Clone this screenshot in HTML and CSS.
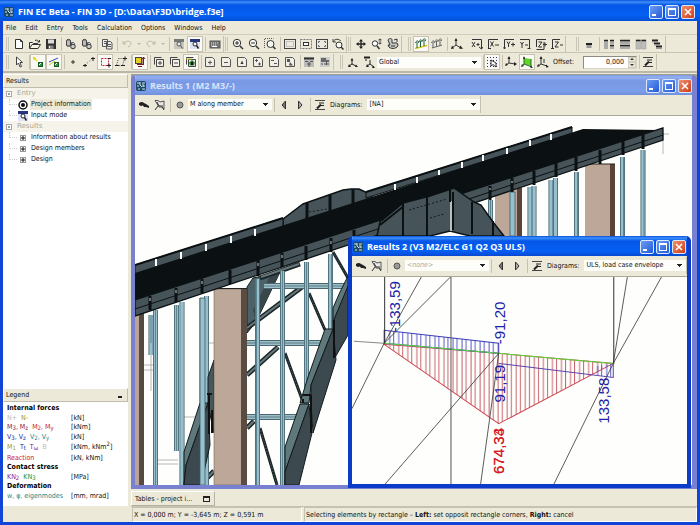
FILE: index.html
```html
<!DOCTYPE html>
<html lang="en">
<head>
<meta charset="utf-8">
<title>FIN EC Beta - FIN 3D</title>
<link rel="stylesheet" href="styles.css">
</head>
<body>
<svg class="sprite" aria-hidden="true">
  <symbol id="app" viewBox="0 0 12 12"><rect x="1" y="1" width="10" height="10" rx="2" fill="#1c4a68"/><path d="M2 3h3M7 3h3M2 6h2M5 5l2 2M8 6h2M3 9h2M7 9h3M5 2v3M8 4v3" stroke="#cfe4ea"/></symbol>
  <symbol id="new" viewBox="0 0 12 12"><path d="M2.500 1.500h5l2 2v7h-7z" fill="#fff" stroke="#333"/><path d="M7.500 1.500v2h2" fill="none" stroke="#333"/></symbol>
  <symbol id="open" viewBox="0 0 12 12"><path d="M.5 10V4.500h3l1 1h4V7M.5 10.500l2.500-4h8.500l-2.500 4z" fill="#f6f4e8" stroke="#333"/><path d="M6 2.500c2-1 3 0 4 1.500M10.500 2v2h-2" fill="none" stroke="#333"/></symbol>
  <symbol id="save" viewBox="0 0 12 12"><rect x="1" y="1" width="10" height="10" fill="#333"/><rect x="3" y="1.500" width="6" height="4" fill="#ddd"/><rect x="3.500" y="7.500" width="5" height="3.500" fill="#888"/><rect x="4" y="8" width="1" height="2" fill="#fff"/></symbol>
  <symbol id="db" viewBox="0 0 12 12"><path d="M1.500 2.500c0-1.500 4-1.500 4 0v5c0 1-4 1-4 0z" fill="#888" stroke="#444"/><path d="M2 4h3M2 6h3" stroke="#eee"/><path d="M6.500 4.500h2l1 1v2h-3z" fill="#ddd" stroke="#555"/><circle cx="8" cy="8.500" r="2.300" fill="#ccc" stroke="#333"/></symbol>
  <symbol id="copy" viewBox="0 0 12 12"><path d="M1.500 1.500h5v7h-5zM5.500 3.500h4l1.500 1.500v6h-5.500z" fill="#eee" stroke="#555"/><path d="M3 3.500h2M3 5.500h2M7 6.500h3M7 8.500h3" stroke="#555"/></symbol>
  <symbol id="undo" viewBox="0 0 12 12"><path d="M2 3v3h3M2 6c2-3 7-4 8-1 0 2-1 3-3 4" fill="none" stroke="#bdb9a8"/></symbol>
  <symbol id="redo" viewBox="0 0 12 12"><path d="M10 3v3H7M10 6C8 3 3 2 2 5c0 2 1 3 3 4" fill="none" stroke="#bdb9a8"/></symbol>
  <symbol id="view" viewBox="0 0 12 12"><rect x="1" y="1" width="10" height="10" fill="#c8c6bd"/><rect x="1" y="1" width="10" height="3" fill="#777"/><circle cx="6" cy="6" r="2" fill="#eee" stroke="#555"/><path d="M7.500 7.500l2 3" stroke="#444"/></symbol>
  <symbol id="viewb" viewBox="0 0 12 12"><rect x="1" y="1" width="10" height="10" fill="#dde3f4"/><rect x="1" y="1" width="10" height="3" fill="#26367e"/><circle cx="6" cy="6" r="2" fill="#fff" stroke="#222"/><path d="M7.500 7.500l2 3" stroke="#222" stroke-width="1.500"/></symbol>
  <symbol id="keys" viewBox="0 0 12 12"><rect x="1" y="3" width="10" height="7" fill="#777" stroke="#555"/><path d="M2 5h8M2 7h6" stroke="#ddd" stroke-dasharray="1 1"/><path d="M3 8.500h5" stroke="#fff"/></symbol>
  <symbol id="zin" viewBox="0 0 12 12"><circle cx="5" cy="5" r="3.700" fill="#f8f8f4" stroke="#333"/><path d="M3 5h4M5 3v4" stroke="#333"/><path d="M8 8l3 3" stroke="#333" stroke-width="1.500"/></symbol>
  <symbol id="zout" viewBox="0 0 12 12"><circle cx="5" cy="5" r="3.700" fill="#f8f8f4" stroke="#333"/><path d="M3 5h4" stroke="#333"/><path d="M8 8l3 3" stroke="#333" stroke-width="1.500"/></symbol>
  <symbol id="zreg" viewBox="0 0 12 12"><path d="M.5 10V.5h9" fill="none" stroke="#555" stroke-dasharray="1 1"/><circle cx="6.500" cy="6" r="3.500" fill="#f8f8f4" stroke="#333"/><path d="M9 8.500l2.500 2.500" stroke="#333" stroke-width="1.500"/></symbol>
  <symbol id="fit" viewBox="0 0 12 12"><rect x=".5" y="1.500" width="11" height="9" fill="#eceae0" stroke="#444"/><rect x="2.500" y="3.500" width="7" height="5" fill="none" stroke="#999" stroke-dasharray="1 1"/></symbol>
  <symbol id="fit2" viewBox="0 0 12 12"><rect x=".5" y="1.500" width="11" height="9" fill="none" stroke="#777" stroke-dasharray="2 1"/><rect x="3.500" y="4.500" width="5" height="3" fill="#fff" stroke="#333"/></symbol>
  <symbol id="fit3" viewBox="0 0 12 12"><rect x=".5" y="1.500" width="11" height="9" fill="#eceae0" stroke="#444"/><path d="M2.500 5V3.500H4M8 3.500h1.500V5M2.500 7v1.500H4M8 8.500h1.500V7" fill="none" stroke="#666"/></symbol>
  <symbol id="zprev" viewBox="0 0 12 12"><circle cx="7" cy="7" r="3" fill="#f8f8f4" stroke="#333"/><path d="M9 9l2.500 2.500" stroke="#333" stroke-width="1.500"/><path d="M1 1v3h3M1 4c2-4 6-3 8-1" fill="none" stroke="#444"/></symbol>
  <symbol id="move" viewBox="0 0 12 12"><path d="M6 2v8M2 6h8" stroke="#222" stroke-width="1.300"/><path d="M6 1l2 2.500H4zM6 11l2-2.500H4zM1 6l2.500-2v4zM11 6L8.500 4v4z" fill="#222"/></symbol>
  <symbol id="zdyn" viewBox="0 0 12 12"><circle cx="4" cy="5.500" r="2.700" fill="#fff" stroke="#333"/><path d="M6 8l2.500 3" stroke="#333" stroke-width="1.500"/><path d="M7.500 2l1.500-1 1.500 1M7.500 5L9 6l1.500-1M9 1v5" fill="none" stroke="#444"/></symbol>
  <symbol id="rot" viewBox="0 0 12 12"><path d="M1 2c1-2 4-2 4 0v3h5l1 2c0 3-6 5-9 2L1 7h2z" fill="#c9c9c4" stroke="#333"/><path d="M7 2l3-1v3M4 8h4" fill="none" stroke="#333"/></symbol>
  <symbol id="loads" viewBox="0 0 12 12"><path d="M0 10.500l12-3" stroke="#d0c020" stroke-width="1.500"/><path d="M2 10V4M5.500 9V3M9 8V2" stroke="#1f6030"/><path d="M.5 5c1-3 3-3 3 0M4 4c1-3 3-3 3 0M7.500 3c1-3 3-3 3 0" fill="none" stroke="#215c4a"/></symbol>
  <symbol id="loads2" viewBox="0 0 12 12"><path d="M1 10l10-3M2 10V4M5.500 9V3M9 8V2M.5 5c1-3 3-3 3 0M4 4c1-3 3-3 3 0M7.500 3c1-3 3-3 3 0" fill="none" stroke="#666"/></symbol>
  <symbol id="axes" viewBox="0 0 12 12"><path d="M5 1v6l5 3M5 7l-4 3" fill="none" stroke="#333"/><path d="M5 0l1.500 3h-3zM12 11L8 10.500l1.500-3zM0 11l1-3.500 2 3z" fill="#222"/></symbol>
  <symbol id="vX" viewBox="0 0 12 12"><path d="M1 1.500h9.500V11M8 9l2.500 2 1.500-2" fill="none" stroke="#333"/><path d="M1 4l3 5M4 4L1 9M5.500 6.500h3M7 5v3" stroke="#333"/></symbol>
  <symbol id="vXm" viewBox="0 0 12 12"><path d="M1.500 11V1.500H11M1.500 10.500H4" fill="none" stroke="#333"/><path d="M3.500 3.500l3 5M6.500 3.500l-3 5M8 7h4" stroke="#333"/></symbol>
  <symbol id="vY" viewBox="0 0 12 12"><path d="M1.500 11V1.500H11M.5 9.500l1 1.500 1-1.500" fill="none" stroke="#333"/><path d="M4 3.500l1.500 2.500L7 3.500M5.500 6v3M8 6.500h4M10 4.500v4" fill="none" stroke="#333"/></symbol>
  <symbol id="vYm" viewBox="0 0 12 12"><path d="M1 1.500h9.500V11M8.500 10.500h3" fill="none" stroke="#333"/><path d="M1.500 4L3 6.500 4.500 4M3 6.500V10M6 7h3" fill="none" stroke="#333"/></symbol>
  <symbol id="vZ" viewBox="0 0 12 12"><path d="M1.500 9V1.500H11M1.500 11.500H9V4" fill="none" stroke="#333"/><path d="M3.500 4h3.500l-3.500 5H7M8 6.500h4M10 4.500v4" fill="none" stroke="#333"/></symbol>
  <symbol id="vZm" viewBox="0 0 12 12"><path d="M1.500 11V1.500H9M0 10.500h3" fill="none" stroke="#333"/><path d="M4 4h3.500L4 9h3.500M9 7h3" fill="none" stroke="#333"/></symbol>
  <symbol id="wmin" viewBox="0 0 12 12"><rect x="3.500" y="5" width="5" height="5" fill="#999"/><path d="M3 6h6" stroke="#222" stroke-width="2"/></symbol>
  <symbol id="wcas" viewBox="0 0 12 12"><path d="M1 2h4v9H1zM7 2h4v4H7zM7 7h4v4H7z" fill="#aaa"/><path d="M1 2.500h4M7 2.500h4M7 7.500h4" stroke="#222" stroke-width="1.500"/></symbol>
  <symbol id="whor" viewBox="0 0 12 12"><path d="M1 2h10v4H1zM1 7h10v4H1z" fill="#aaa"/><path d="M1 2.500h10M1 7.500h10" stroke="#222" stroke-width="1.500"/></symbol>
  <symbol id="wver" viewBox="0 0 12 12"><path d="M1 2h4.500v9H1zM6.500 2H11v9H6.500z" fill="#bbb" stroke="#999" stroke-width=".5"/><path d="M1 2.500h4.500M6.500 2.500H11" stroke="#222" stroke-width="1.500"/></symbol>
  <symbol id="wstk" viewBox="0 0 12 12"><path d="M1 2.500h6M3 5.500h6M5 8.500h6" stroke="#222" stroke-width="2"/><path d="M1 4h2M3 7h2M5 10.500h6" stroke="#999"/></symbol>
  <symbol id="cur" viewBox="0 0 12 12"><path d="M3.500 1v8l2-2 1.500 4 1.500-.5L7 6.500h2.500z" fill="#fff" stroke="#444"/></symbol>
  <symbol id="snap1" viewBox="0 0 12 12"><path d="M1 1l4 4M3 1v3M1 3h3" stroke="#e4e020" stroke-width="1.500"/><rect x="6.500" y="6.500" width="4" height="4" fill="#2a9a3a" stroke="#155a20"/><path d="M7 9l2-2" stroke="#fff"/></symbol>
  <symbol id="snap2" viewBox="0 0 12 12"><path d="M1 6l9-4" stroke="#3050b0"/><path d="M1 9l6-4" stroke="#c8c820"/><rect x="6.500" y="6.500" width="4" height="4" fill="#2a9a3a" stroke="#155a20"/><path d="M7 9l2-2" stroke="#fff"/></symbol>
  <symbol id="pt" viewBox="0 0 12 12"><path d="M4 6h4M6 4v4" stroke="#333"/></symbol>
  <symbol id="ln" viewBox="0 0 12 12"><path d="M2 9l7-6" stroke="#555" stroke-dasharray="1 2"/><path d="M0 9.500h4M2 8v3M8 2.500h4M10 1v4" stroke="#222"/></symbol>
  <symbol id="sq" viewBox="0 0 12 12"><rect x="2.500" y="2.500" width="7" height="7" fill="none" stroke="#c02840" stroke-dasharray="2 1"/><path d="M8 9.500h4M10 7.500v4M9 2.500h3" stroke="#222"/></symbol>
  <symbol id="pg" viewBox="0 0 12 12"><path d="M3.500 2.500h6l-2 7h-6z" fill="none" stroke="#555" stroke-dasharray="1 1"/><path d="M8 2.500h4M10 .5v4M0 9.500h4M6 9.500h4" stroke="#222"/></symbol>
  <symbol id="sel" viewBox="0 0 12 12"><rect x="1.500" y="1.500" width="6" height="6" fill="#e8d020" stroke="#444"/><path d="M3 8.500h6V2M9.500 1v8M8 3l1.500-2L11 3M4 10.500h4" fill="none" stroke="#7a1c20"/></symbol>
  <symbol id="b" viewBox="0 0 12 12"><path d="M1.500 8.500v-7h7M3.500 3.500h7v7h-7z" fill="#f2f0e6" stroke="#444"/></symbol>
  <symbol id="b1" viewBox="0 0 12 12"><use href="#b"/><path d="M5 7h4M7 5v4" stroke="#444"/></symbol>
  <symbol id="b2" viewBox="0 0 12 12"><use href="#b"/><path d="M5 7h4" stroke="#444"/></symbol>
  <symbol id="b3" viewBox="0 0 12 12"><use href="#b"/><path d="M4 6.500l3-2.500 3 2.500-1 3H5z" fill="#2d8a34"/><path d="M1 3h6" stroke="#c8c820"/><rect x="6" y="6" width="2" height="3" fill="#111"/></symbol>
  <symbol id="c" viewBox="0 0 12 12"><path d="M1.500 1.500h7l2 2v7h-9z" fill="#f2f0e6" stroke="#555"/></symbol>
  <symbol id="c1" viewBox="0 0 12 12"><use href="#c"/><path d="M4 6.500h4M6 4.500v4" stroke="#555"/></symbol>
  <symbol id="c2" viewBox="0 0 12 12"><use href="#c"/><path d="M4 6.500h4" stroke="#555"/></symbol>
  <symbol id="c3" viewBox="0 0 12 12"><use href="#c"/><path d="M6 4.500l1.500 3.500h-3z" fill="#333"/></symbol>
  <symbol id="c4" viewBox="0 0 12 12"><use href="#c"/><path d="M3 4.500h3M4.500 3v3M6 8h3M7.500 6.500v3" stroke="#555"/></symbol>
  <symbol id="c5" viewBox="0 0 12 12"><use href="#c"/><path d="M3 4.500h3M6 7.500h3" stroke="#555"/></symbol>
  <symbol id="c6" viewBox="0 0 12 12"><use href="#c"/><path d="M3 3h3v3H3zM6 6l3 3.500H5z" fill="#555"/></symbol>
  <symbol id="tb1" viewBox="0 0 12 12"><rect x="1" y="1" width="10" height="10" fill="#bbb"/><path d="M1 2.500h10" stroke="#333" stroke-width="2"/><path d="M2 5.500h3M7 5.500h3M4 8h4M6 6v5" stroke="#555"/></symbol>
  <symbol id="tb2" viewBox="0 0 12 12"><rect x="1" y="1" width="10" height="10" fill="#ccc"/><path d="M2 3h5M2 5h8" stroke="#444" stroke-width="1.500"/><path d="M5 8h5M7.500 6v3M2 8h2" stroke="#555"/></symbol>
  <symbol id="ax1" viewBox="0 0 12 12"><path d="M5 3v5l4 2M5 8l-3 2" fill="none" stroke="#222"/><path d="M5 2l1.500 2.500h-3zM11 11H8l1-2.500zM1 11l1-3 2 3z" fill="#222"/></symbol>
  <symbol id="ax2" viewBox="0 0 12 12"><path d="M1 1.500h6" stroke="#222" stroke-width="2"/><path d="M2 4h2M7 4v4l4 3M7 8l-3 2" fill="none" stroke="#222"/><path d="M12 12H9l1-2.500zM3 11l1-3 2 3z" fill="#222"/></symbol>
  <symbol id="grid" viewBox="0 0 12 12"><path d="M1 1.500h11M1 4.500h11M1 7.500h11M1 10.500h11" stroke="#26307a" stroke-dasharray="1 2"/><path d="M5 4v6l2-1.500L10 11V7z" fill="#fff" stroke="#333"/></symbol>
  <symbol id="xy" viewBox="0 0 12 12"><path d="M4 1v6l6 1M4 7l-3 2" fill="none" stroke="#333"/><path d="M4 0l1.500 3h-3zM12 8L9 6v4zM0 10l1-3 2 2z" fill="#222"/></symbol>
  <symbol id="plane" viewBox="0 0 12 12"><path d="M3 2l7 1v7l-7-2z" fill="#62d428"/><path d="M3 1v7l8 3M3 8l-2 2M10 3v7" fill="none" stroke="#1c6a20"/><path d="M0 11l1-3 2 2zM12 12l-3-.5 1-2zM3 0l1 3H2z" fill="#222"/></symbol>
  <symbol id="yz" viewBox="0 0 12 12"><path d="M4 1v7l6 2M4 8l-3 2M7 3v4" fill="none" stroke="#333"/><path d="M4 0l1.500 3h-3zM12 11L9 8.500v3zM0 11l1-3 2 2z" fill="#222"/></symbol>
  <symbol id="set" viewBox="0 0 12 12"><path d="M1 1.500h10M1 10.500h10" stroke="#444"/><path d="M3 9.500l4-4" stroke="#222" stroke-width="2"/><path d="M5 4h5M6 6.500h4" stroke="#222"/></symbol>
  <symbol id="eye" viewBox="0 0 12 12"><path d="M1 4c2-1.500 4-1 5 0l2 1 3 2v2L8 8 6 8 5 6.500 3 7 1 6z" fill="#222"/></symbol>
  <symbol id="pan" viewBox="0 0 12 12"><path d="M1 1.500h3L6 3l4-1v8l-2-2H5z" fill="#e8e8e4" stroke="#555"/><path d="M4 7l-3 4M8 8l2 3M3 3l2 4h4" fill="none" stroke="#333"/></symbol>
  <symbol id="dot" viewBox="0 0 12 12"><circle cx="6" cy="6" r="3" fill="#999" stroke="#555"/></symbol>
  <symbol id="prev" viewBox="0 0 12 12"><path d="M7.500 2v8L4 6z" fill="#777" stroke="#333"/></symbol>
  <symbol id="next" viewBox="0 0 12 12"><path d="M4.500 2v8L8 6z" fill="#aaa" stroke="#333"/></symbol>
  <symbol id="radio" viewBox="0 0 12 12"><circle cx="6" cy="6" r="4" fill="#fff" stroke="#111" stroke-width="1.500"/><circle cx="6" cy="6" r="2" fill="#111"/></symbol>
  <symbol id="box+" viewBox="0 0 12 12"><rect x="3.500" y="3.500" width="5" height="5" fill="#fff" stroke="#999"/><path d="M4 6h4M6 4v4" stroke="#111"/></symbol>
  <symbol id="box-" viewBox="0 0 12 12"><rect x="3.500" y="3.500" width="5" height="5" fill="#fff" stroke="#aaa"/><path d="M5 6h2" stroke="#444"/></symbol>
  <symbol id="cmin" viewBox="0 0 12 12"><path d="M2 9h4" stroke="#fff" stroke-width="2"/></symbol>
  <symbol id="cmax" viewBox="0 0 12 12"><path d="M2 3h8" stroke="#fff" stroke-width="2"/><rect x="2.500" y="2.500" width="7" height="7" fill="none" stroke="#fff"/></symbol>
  <symbol id="ccls" viewBox="0 0 12 12"><path d="M3 3l6 6M9 3L3 9" stroke="#fff" stroke-width="1.500"/></symbol>
</svg>

<div class="app">
  <header class="titlebar">
    <svg class="ic"><use href="#app"/></svg><h1>FIN EC Beta - FIN 3D - [D:\Data\F3D\bridge.f3e]</h1>
    <div class="caps">
      <button aria-label="Minimize"><svg class="ic"><use href="#cmin"/></svg></button>
      <button aria-label="Maximize"><svg class="ic"><use href="#cmax"/></svg></button>
      <button class="close" aria-label="Close"><svg class="ic"><use href="#ccls"/></svg></button>
    </div>
  </header>

  <nav class="menu">
    <button>File</button><button>Edit</button><button>Entry</button><button>Tools</button><button>Calculation</button><button>Options</button><button>Windows</button><button>Help</button>
  </nav>

  <div class="bar">
    <div class="group">
      <button class="tb" aria-label="New"><svg class="ic"><use href="#new"/></svg></button>
      <button class="tb" aria-label="Open"><svg class="ic"><use href="#open"/></svg></button>
      <button class="tb" aria-label="Save"><svg class="ic"><use href="#save"/></svg></button>
      <i class="sep"></i>
      <button class="tb" aria-label="Import"><svg class="ic"><use href="#db"/></svg></button>
      <button class="tb" aria-label="Export"><svg class="ic"><use href="#db"/></svg></button>
      <i class="sep"></i>
      <button class="tb" aria-label="Copy"><svg class="ic"><use href="#copy"/></svg></button>
      <i class="sep"></i>
      <button class="tb" aria-label="Undo"><svg class="ic"><use href="#undo"/></svg></button>
      <button class="drop" aria-label="Undo list"></button>
      <button class="tb" aria-label="Redo"><svg class="ic"><use href="#redo"/></svg></button>
      <button class="drop" aria-label="Redo list"></button>
      <i class="sep"></i>
      <button class="tb" aria-label="Input view"><svg class="ic"><use href="#view"/></svg></button>
      <button class="tb on" aria-label="Result view"><svg class="ic"><use href="#viewb"/></svg></button>
      <i class="sep"></i>
      <button class="tb" aria-label="Calculator"><svg class="ic"><use href="#keys"/></svg></button>
    </div>
    <div class="group">
      <button class="tb" aria-label="Zoom in"><svg class="ic"><use href="#zin"/></svg></button>
      <button class="tb" aria-label="Zoom out"><svg class="ic"><use href="#zout"/></svg></button>
      <button class="tb" aria-label="Zoom region"><svg class="ic"><use href="#zreg"/></svg></button>
      <i class="sep"></i>
      <button class="tb" aria-label="Fit"><svg class="ic"><use href="#fit"/></svg></button>
      <button class="tb" aria-label="Fit selection"><svg class="ic"><use href="#fit2"/></svg></button>
      <button class="tb" aria-label="Fit all"><svg class="ic"><use href="#fit3"/></svg></button>
      <button class="tb" aria-label="Previous zoom"><svg class="ic"><use href="#zprev"/></svg></button>
    </div>
    <div class="group">
      <button class="tb" aria-label="Pan"><svg class="ic"><use href="#move"/></svg></button>
      <button class="tb" aria-label="Dynamic zoom"><svg class="ic"><use href="#zdyn"/></svg></button>
      <button class="tb" aria-label="Rotate"><svg class="ic"><use href="#rot"/></svg></button>
    </div>
    <div class="group apart">
      <button class="tb on" aria-label="Axonometry"><svg class="ic"><use href="#loads"/></svg></button>
      <button class="tb" aria-label="Perspective"><svg class="ic"><use href="#loads2"/></svg></button>
      <i class="sep"></i>
      <button class="tb" aria-label="General view"><svg class="ic"><use href="#axes"/></svg></button>
      <i class="sep plain"></i>
      <button class="tb" aria-label="View X+"><svg class="ic"><use href="#vX"/></svg></button>
      <button class="tb" aria-label="View X-"><svg class="ic"><use href="#vXm"/></svg></button>
      <button class="tb" aria-label="View Y+"><svg class="ic"><use href="#vY"/></svg></button>
      <button class="tb" aria-label="View Y-"><svg class="ic"><use href="#vYm"/></svg></button>
      <button class="tb" aria-label="View Z+"><svg class="ic"><use href="#vZ"/></svg></button>
      <button class="tb" aria-label="View Z-"><svg class="ic"><use href="#vZm"/></svg></button>
    </div>
    <div class="group apart">
      <button class="tb" aria-label="Minimize all"><svg class="ic"><use href="#wmin"/></svg></button>
      <i class="sep"></i>
      <button class="tb" aria-label="Arrange"><svg class="ic"><use href="#wcas"/></svg></button>
      <button class="tb" aria-label="Tile horizontally"><svg class="ic"><use href="#whor"/></svg></button>
      <button class="tb" aria-label="Tile vertically"><svg class="ic"><use href="#wver"/></svg></button>
      <button class="tb" aria-label="Cascade"><svg class="ic"><use href="#wstk"/></svg></button>
    </div>
  </div>

  <div class="bar second">
    <div class="group">
      <button class="tb" aria-label="Select"><svg class="ic"><use href="#cur"/></svg></button>
      <i class="sep"></i>
      <button class="tb on" aria-label="Select joints"><svg class="ic"><use href="#snap1"/></svg></button>
      <button class="tb on" aria-label="Select members"><svg class="ic"><use href="#snap2"/></svg></button>
      <i class="sep"></i>
      <button class="tb" aria-label="By point"><svg class="ic"><use href="#pt"/></svg></button>
      <button class="tb" aria-label="By line"><svg class="ic"><use href="#ln"/></svg></button>
      <button class="tb on" aria-label="By rectangle"><svg class="ic"><use href="#sq"/></svg></button>
      <button class="tb" aria-label="By polygon"><svg class="ic"><use href="#pg"/></svg></button>
      <i class="sep"></i>
      <button class="tb on" aria-label="Crossing"><svg class="ic"><use href="#sel"/></svg></button>
      <i class="sep"></i>
      <button class="tb" aria-label="Add"><svg class="ic"><use href="#b1"/></svg></button>
      <button class="tb" aria-label="Remove"><svg class="ic"><use href="#b2"/></svg></button>
      <button class="tb on" aria-label="Invert"><svg class="ic"><use href="#b3"/></svg></button>
      <i class="sep"></i>
      <button class="tb" aria-label="Select all"><svg class="ic"><use href="#c1"/></svg></button>
      <button class="tb" aria-label="Deselect all"><svg class="ic"><use href="#c2"/></svg></button>
      <button class="tb" aria-label="Select group"><svg class="ic"><use href="#c3"/></svg></button>
      <button class="tb" aria-label="Add group"><svg class="ic"><use href="#c4"/></svg></button>
      <button class="tb" aria-label="Remove group"><svg class="ic"><use href="#c5"/></svg></button>
      <button class="tb" aria-label="Invert group"><svg class="ic"><use href="#c6"/></svg></button>
      <i class="sep"></i>
      <button class="tb" aria-label="Filter"><svg class="ic"><use href="#tb1"/></svg></button>
      <button class="tb" aria-label="Filter settings"><svg class="ic"><use href="#tb2"/></svg></button>
    </div>
    <div class="group apart">
      <button class="tb" aria-label="Coordinate system"><svg class="ic"><use href="#ax1"/></svg></button>
      <button class="tb" aria-label="Coordinate systems"><svg class="ic"><use href="#ax2"/></svg></button>
      <select class="combo w-global" aria-label="Coordinate system name"><option>Global</option></select>
      <i class="sep"></i>
      <button class="tb on" aria-label="Grid"><svg class="ic"><use href="#grid"/></svg></button>
      <i class="sep"></i>
      <button class="tb" aria-label="Plane XY"><svg class="ic"><use href="#xy"/></svg></button>
      <button class="tb on" aria-label="Plane XZ"><svg class="ic"><use href="#plane"/></svg></button>
      <button class="tb" aria-label="Plane YZ"><svg class="ic"><use href="#yz"/></svg></button>
      <label class="lbl" for="offset">Offset:</label>
      <span class="spin"><input id="offset" type="text" value="0,000"><span class="steps"><button aria-label="Increase"></button><button class="down" aria-label="Decrease"></button></span></span>
      <i class="sep"></i>
      <button class="tb" aria-label="Settings"><svg class="ic"><use href="#set"/></svg></button>
    </div>
  </div>

  <div class="main">
    <aside class="side">
      <h2 class="head">Results</h2>
      <ul class="tree">
        <li class="cat"><svg class="ic"><use href="#box-"/></svg>Entry</li>
        <li class="leaf"><svg class="ic"><use href="#radio"/></svg><span class="picked">Project information</span></li>
        <li class="leaf"><svg class="ic"><use href="#viewb"/></svg><span>Input mode</span></li>
        <li class="cat"><svg class="ic"><use href="#box-"/></svg>Results</li>
        <li class="leaf"><svg class="ic"><use href="#box+"/></svg><span>Information about results</span></li>
        <li class="leaf"><svg class="ic"><use href="#box+"/></svg><span>Design members</span></li>
        <li class="leaf"><svg class="ic"><use href="#box+"/></svg><span>Design</span></li>
      </ul>
      <h2 class="head">Legend <button class="fold" aria-label="Collapse legend"></button></h2>
      <table class="legend">
        <tr><th colspan="2">Internal forces</th></tr>
        <tr><td><b class="c-grey">N+</b>&nbsp; <b class="c-olive">N-</b></td><td>[kN]</td></tr>
        <tr><td><b class="c-maroon">M<sub>3</sub>, M<sub>z</sub></b>&nbsp; <b class="c-red">M<sub>2</sub>, M<sub>y</sub></b></td><td>[kNm]</td></tr>
        <tr><td><b class="c-navy">V<sub>3</sub>, V<sub>z</sub></b>&nbsp; <b class="c-teal">V<sub>2</sub>, V<sub>y</sub></b></td><td>[kN]</td></tr>
        <tr class="tall"><td><b class="c-olive">M<sub>1</sub></b>&nbsp; <b class="c-navy">T<sub>t</sub></b>&nbsp; <b class="c-purple">T<sub>ω</sub></b>&nbsp; <b class="c-grey">B</b></td><td>[kNm, kNm<sup>2</sup>]</td></tr>
        <tr><td><b class="c-red">Reaction</b></td><td>[kN, kNm]</td></tr>
        <tr><th colspan="2">Contact stress</th></tr>
        <tr><td><b class="c-purple">KN<sub>2</sub></b>&nbsp; <b class="c-green">KN<sub>3</sub></b></td><td>[MPa]</td></tr>
        <tr><th colspan="2">Deformation</th></tr>
        <tr><td><b class="c-teal">w, φ, eigenmodes</b></td><td>[mm, mrad]</td></tr>
      </table>
    </aside>

    <div class="work">
      <div class="desk">
        <section class="win idle">
          <header class="wtitle">
            <svg class="ic"><use href="#app"/></svg><h2>Results 1 (M2 M3/-)</h2>
            <div class="caps">
              <button aria-label="Minimize"><svg class="ic"><use href="#cmin"/></svg></button>
              <button aria-label="Maximize"><svg class="ic"><use href="#cmax"/></svg></button>
              <button class="close" aria-label="Close"><svg class="ic"><use href="#ccls"/></svg></button>
            </div>
          </header>
          <div class="wbar">
            <div class="wgroup">
              <button class="tb" aria-label="Visibility"><svg class="ic"><use href="#eye"/></svg></button>
              <button class="tb" aria-label="Scene"><svg class="ic"><use href="#pan"/></svg></button>
              <i class="sep"></i>
              <button class="tb" aria-label="State"><svg class="ic"><use href="#dot"/></svg></button>
              <select class="combo w-case" aria-label="Load case"><option>M along member</option></select>
              <i class="sep"></i>
              <button class="tb" aria-label="Previous"><svg class="ic"><use href="#prev"/></svg></button>
              <button class="tb" aria-label="Next"><svg class="ic"><use href="#next"/></svg></button>
              <i class="sep"></i>
              <button class="tb" aria-label="Diagram settings"><svg class="ic"><use href="#set"/></svg></button>
              <label class="lbl" for="d1">Diagrams:</label>
              <select class="combo w-diag" id="d1"><option>[NA]</option></select>
            </div>
          </div>
          <svg class="scene" viewBox="135 116 557 369" preserveAspectRatio="xMinYMin slice" role="img" aria-label="3D model of the bridge">
            <g fill="none" stroke="#999" stroke-width=".7"><path d="M135 365h20M135 370h20M155 460h23M155 464h23M183 417h20M209 343h5M151 355v36M662 134h7M663 133v21"/></g>
            <path d="M135 312h4v173h-4z" fill="#b9a495"/><path d="M139 312h5v173h-5z" fill="#554a42"/>
            <!-- far arch and bracing -->
            <path d="M247 287l6-9 27-6-24 50-9 11z" fill="#4d6268" stroke="#16201f"/>
            <path d="M253 310l18-36 9-2-24 50z" fill="#39474b"/>
            <g fill="none" stroke="#1b2628" stroke-width="5"><path d="M247 328l55-41M247 375l31-28M247 428l7-7M204 481l10-10M260 278l40-14"/></g>
            <g fill="none" stroke="#66787c" stroke-width="2"><path d="M247 328l55-41M247 375l31-28M247 428l7-7M204 481l10-10M261 277l38-13"/></g>
            <g fill="none" stroke="#1b2628" stroke-width="3"><path d="M309 293l16 37M285 353l18 49M260 428l17 57M333 252l15 26"/></g>
            <g fill="none" stroke="#5b6a6c" stroke-dasharray="1 2"><path d="M309 293l16 37M285 353l18 49M260 428l17 57M333 252l15 26"/></g>
            <g fill="none" stroke="#4c666f" stroke-width="6"><path d="M264 286h84M247 343h78M247 417h50"/></g>
            <g fill="none" stroke="#9cc0ca" stroke-width="4"><path d="M264 286h84M247 343h78M247 417h50"/></g>
            <g fill="none" stroke="#5c7a83"><path d="M264 286h84M247 343h78M247 417h50"/></g>
            <!-- columns under the deck -->
            <g fill="none" stroke="#3b5a64" stroke-width="5"><path d="M151 315v40M155.500 310v175M176.500 305v146M182 302v183M202 298v187M206.500 296v189M257.500 279v206M282.500 271v214M306.500 262v142M330.500 254v75M490.500 200v36M512.500 192v44M530 187v49M534 186v50M551 180v56M555.500 178v58M576.500 172v64M622.500 157v79M643 150v86"/></g>
            <g fill="none" stroke="#98c0cc" stroke-width="3.500"><path d="M151 315v40M155.500 310v175M176.500 305v146M182 302v183M202 298v187M206.500 296v189M257.500 279v206M282.500 271v214M306.500 262v142M330.500 254v75M490.500 200v36M512.500 192v44M530 187v49M534 186v50M551 180v56M555.500 178v58M576.500 172v64M622.500 157v79M643 150v86"/></g>
            <g fill="none" stroke="#4f7683" stroke-width=".8"><path d="M151 315v28M155.500 310v175M176.500 305v146M203.500 298v187M256.500 279v206M282.500 271v214M306.500 262v142M331.500 254v75M490.500 200v36M512.500 192v44M532 187v49M553 180v56M577.500 172v64M623.500 157v79M644 150v86"/></g>
            <!-- near arch ribs -->
            <g stroke="#121a1c" stroke-linejoin="round">
              <path d="M348 276l-8 16-7 16v14l15-34z" fill="#5f787c"/><path d="M348 286l-15 36v39l15-26z" fill="#3c4a50"/>
              <path d="M325 329l8 0-22 56-2 18h-9l8-26z" fill="#5f787c"/><path d="M333 329l3 31-23 73-2-30v-18z" fill="#3c4a50"/>
              <path d="M300 404h9l-23 65-1 16v-38z" fill="#5f787c"/><path d="M309 404l3 29-13 52h-14v-13z" fill="#3c4a50"/>
              <path d="M200 403h8l-22 62-2 20v-33z" fill="#5f787c"/><path d="M208 403l2 42-9 40h-17l2-20z" fill="#3c4a50"/>
              <path d="M214 360l-6 17v28l6 28z" fill="#47585d"/>
            </g>
            <path d="M303 395h8M303 399v4M311 395v38M334 320v38M209 394v40M207 394h5M212 410v23" fill="none" stroke="#111" stroke-width="2"/>
            <path d="M200 298h5v187h-5z" fill="#98c0cc" stroke="#3b5a64" stroke-width=".8"/>
            <!-- piers -->
            <path d="M214 289h28v196h-28z" fill="#bca798" stroke="#77675c" stroke-width=".6"/><path d="M241 289h6v196h-6z" fill="#5a4c42"/><path d="M214 288.500h33" stroke="#222"/>
            <path d="M495 196l22-8v48h-22z" fill="#bca798"/><path d="M517 188h5v48h-5z" fill="#5a4338"/>
            <path d="M585 164h26v72h-26z" fill="#bca798"/><path d="M610 164h5v72h-5z" fill="#5a4338"/><path d="M585 164h30" stroke="#2a201a"/>
            <path d="M510 192h5v44h-5z" fill="#98c0cc" stroke="#3b5a64" stroke-width=".8"/>
            <!-- deck -->
            <path d="M283 219l20-15 40-14 8-1 8 0 13 6v8l-89 28z" fill="#46545a" stroke="#0c1214" stroke-width="1.500"/>
            <path d="M135 265l148-47v9l-148 47zM366 192l206-65v7l-206 64z" fill="#46545a" stroke="#0c1214"/>
            <path d="M135 265l148-47M366 192l206-65" stroke="#0a0f11" stroke-width="2"/>
            <path d="M135 300l528-172v12L135 316z" fill="#46545a" stroke="#0b1113" stroke-width="1.300"/>
            <path d="M135 309l528-174" stroke="#0b1113"/>
            <path d="M135 273l448-144 74 1 6-2-196 64-332 108z" fill="#0b1012"/>
            <path d="M307 203v16M330 195v17M353 189v16" stroke="#0c1214" stroke-width="3"/>
            <path d="M309 212l18-3" stroke="#151c1e" stroke-dasharray="2 2"/>
            <path d="M156 259v7M181 252v7M206 244v7M231 236v7M255 229v7M395 184v6M417 177v6M439 170v5M462 162v6M483 155v6M507 148v6M530 140v6M551 134v6" stroke="#fff" stroke-width="2"/>
            <path d="M150 296v14M176 288v14M202 279v14M230 270v14M258 260v16M282 253v14M306 246v14M331 238v14M354 230v9M490 186v14M512 178v14M534 171v14M556 163v14M576 157v14M600 150v14M623 141v14M643 135v14" stroke="#0b1113" stroke-width="3"/>
            <path d="M150 298v3M176 290v3M202 281v3M258 263v3M282 255v3M331 241v3M490 188v2M512 181v2" stroke="#ccc"/>
            <!-- arch crown -->
            <path d="M377 236l3-14 23-19 27-7 24-8 20 14 7 3 12 17 11 14h-34l-20-5-20 5z" fill="#46545a" stroke="#0c1214" stroke-width="1.500"/>
            <path d="M403 203v33M427 196v40M472 202v32M380 225l24-19M493 221v15" stroke="#0b1113" stroke-width="2" fill="none"/>
            <path d="M451 201v30" stroke="#dfe5e6" stroke-width="1.500"/><path d="M450 190v12M453 192v38" stroke="#0b1113" stroke-width="2"/>
            <path d="M409 210l38-11M430 218l14-4" stroke="#10181a" stroke-dasharray="2 2"/>
          </svg>
        </section>

        <section class="win float">
          <header class="wtitle">
            <svg class="ic"><use href="#app"/></svg><h2>Results 2 (V3 M2/ELC G1 Q2 Q3 ULS)</h2>
            <div class="caps">
              <button aria-label="Minimize"><svg class="ic"><use href="#cmin"/></svg></button>
              <button aria-label="Maximize"><svg class="ic"><use href="#cmax"/></svg></button>
              <button class="close" aria-label="Close"><svg class="ic"><use href="#ccls"/></svg></button>
            </div>
          </header>
          <div class="wbar">
            <div class="wgroup">
              <button class="tb" aria-label="Visibility"><svg class="ic"><use href="#eye"/></svg></button>
              <button class="tb" aria-label="Scene"><svg class="ic"><use href="#pan"/></svg></button>
              <i class="sep"></i>
              <button class="tb" aria-label="State"><svg class="ic"><use href="#dot"/></svg></button>
              <select class="combo w-case none" aria-label="Load case"><option>&lt;none&gt;</option></select>
              <i class="sep"></i>
              <button class="tb" aria-label="Previous"><svg class="ic"><use href="#prev"/></svg></button>
              <button class="tb" aria-label="Next"><svg class="ic"><use href="#next"/></svg></button>
              <i class="sep"></i>
              <button class="tb" aria-label="Diagram settings"><svg class="ic"><use href="#set"/></svg></button>
              <label class="lbl" for="d2">Diagrams:</label>
              <select class="combo w-diag" id="d2"><option>ULS, load case envelope</option></select>
            </div>
          </div>
          <svg class="scene" viewBox="352 277 335 206" preserveAspectRatio="xMinYMin slice" role="img" aria-label="Internal force diagram">
            <defs>
              <pattern id="hr" x="384" y="277" width="9" height="20" patternUnits="userSpaceOnUse"><path d="M.5 0v20M5.500 0v20" stroke="#c8646c"/></pattern>
              <pattern id="hb" x="384" y="277" width="9" height="20" patternUnits="userSpaceOnUse"><path d="M.5 0v20M5.500 0v20" stroke="#5a5ac8"/></pattern>
            </defs>
            <path d="M384 344l114 79 114-60-114-10z" fill="url(#hr)" stroke="#cc4a54"/>
            <path d="M384 330l114 13v10l-114-10z" fill="url(#hb)" stroke="#4040bb"/>
            <path d="M498 363l114 14v-14" fill="none" stroke="#5a40b0"/>
            <path d="M594 366l18-3v14l-18-2z" fill="url(#hb)"/>
            <path d="M384 343l228 20" stroke="#58d838"/>
            <path d="M354 341l30 2" stroke="#888"/>
            <path d="M384.500 277v66M612.500 277v86" stroke="#333"/><path d="M450.500 277v206" stroke="#555"/>
            <path d="M421 277l-37 66-32 65M450 277l-66 66M498 353L385 483M498 353l-18 130M626 277l-14 86M660 277l-48 86-59 120" fill="none" stroke="#333" stroke-width=".8"/>
            <g class="val"><text transform="translate(400 332) rotate(-90)">-133,59</text><text transform="translate(504 344) rotate(-90)">-91,20</text><text transform="translate(504 402) rotate(-90)">91,19</text><text transform="translate(608 423) rotate(-90)">133,58</text></g>
            <g class="val red"><text transform="translate(503 473) rotate(-90)">674,33</text><text transform="translate(503 473) rotate(-90)">674,34</text></g>
          </svg>
        </section>
      </div>

      <div class="tabs"><button class="tab">Tables - project i...<i class="restore"></i></button></div>
      <footer class="status"><span class="pos">X = 0,000 m; Y = -3,645 m; Z = 0,591 m</span><span class="hint">Selecting elements by rectangle – <b>Left:</b> set opposit rectangle corners, <b>Right:</b> cancel</span></footer>
    </div>
  </div>
</div>
</body>
</html>
```

FILE: styles.css
```css
*, *::before, *::after { box-sizing: border-box; }
body { margin: 0; font: 7px/10px "DejaVu Sans Condensed", "DejaVu Sans", sans-serif; color: #111; background: #ece9d8; }
h1, h2, ul { margin: 0; padding: 0; font: inherit; }
button, select, input { margin: 0; padding: 0; border: 0; font: inherit; color: inherit; background: none; }
.sprite { position: absolute; width: 0; height: 0; }
.ic { width: 12px; height: 12px; flex: none; display: block; }

.app { height: 100vh; display: flex; flex-direction: column; border: 3px solid #1244d8; border-top: 0; background: #ece9d8; }
.titlebar { height: 21px; flex: none; margin: 0 -3px; padding: 2px 5px 0 3px; display: flex; align-items: center; gap: 3px; color: #fff; background: linear-gradient(#0a50d8, #3c90fc 2px, #0456e6 5px, #0560f4 15px, #0452d8 20px); }
h1, .wtitle h2 { font: bold 9px/12px "Open Sans", "Noto Sans", sans-serif; white-space: nowrap; }
.caps { margin-left: auto; display: flex; gap: 2px; }
.caps button { width: 14px; height: 14px; display: grid; place-items: center; border: 1px solid #dce8fc; border-radius: 2px; background: linear-gradient(135deg, #6c9cf4, #2458d8); }
.caps .close { background: linear-gradient(135deg, #f0906c, #d03c18); }

.menu { height: 14px; flex: none; display: flex; align-items: center; gap: 9px; padding-left: 3px; border-bottom: 1px solid #d0cdbd; }
.bar { height: 18px; flex: none; display: flex; align-items: center; padding-left: 2px; border-bottom: 1px solid #c8c5b4; }
.bar.second { height: 20px; border-bottom: 2px solid #bbb8aa; }
.group { height: 16px; display: flex; align-items: center; border-right: 1px solid #c5c2b2; }
.group::before { content: ""; width: 3px; height: 14px; margin: 0 2px 0 1px; border: 1px solid #c9c6b6; border-width: 0 1px; }
.apart { margin-left: 5px; }
.apart + .apart { margin-left: 9px; }
.tb { width: 16px; height: 16px; flex: none; display: grid; place-items: center; }
.tb.on { background: #faf9f4; border: 1px solid #c6c3b2; }
.sep { width: 4px; height: 14px; flex: none; background: linear-gradient(90deg, transparent 2px, #c5c2b2 2px, #c5c2b2 3px, transparent 3px); }
.second .sep { width: 3px; }
.sep.plain { background: none; }
.drop { width: 8px; height: 14px; display: grid; place-items: center; }
.drop::after { content: ""; border: 2px solid transparent; border-top-color: #bdb9a8; border-bottom: 0; }
.combo { appearance: none; height: 11px; padding: 0 12px 0 2px; line-height: 11px; background-color: #fdfdfa; background-image: linear-gradient(#222, #222), linear-gradient(#222, #222), linear-gradient(#222, #222); background-size: 5px 1px, 3px 1px, 1px 1px; background-position: right 4px top 4px, right 5px top 5px, right 6px top 6px; background-repeat: no-repeat; }
.w-global { width: 104px; }
.lbl { padding: 0 5px 0 2px; white-space: nowrap; }
.spin { display: flex; width: 54px; height: 13px; margin-left: 4px; border: 1px solid #8e8c80; border-right-color: #d8d5c6; border-bottom-color: #d8d5c6; background: #fff; }
.spin input { flex: 1; min-width: 0; text-align: right; padding-right: 4px; }
.steps { width: 8px; display: flex; flex-direction: column; background: #ece9d8; }
.steps button { flex: 1; display: grid; place-items: center; border: 1px solid #d0cdbe; }
.steps button::after { content: ""; border: 2px solid transparent; border-top: 0; border-bottom: 2px solid #333; }
.steps .down::after { transform: rotate(180deg); }

.main { flex: 1; min-height: 0; display: flex; gap: 3px; margin-top: 1px; }
.side { width: 125px; flex: none; display: flex; flex-direction: column; padding-bottom: 16px; }
.head { height: 14px; flex: none; display: flex; align-items: center; justify-content: space-between; padding: 0 5px 0 2px; border: 1px solid #c0bdae; border-top-color: #fff; border-left-color: #fff; }
.fold { width: 4px; height: 6px; border-bottom: 2px solid #222; }
.tree { flex: 1; min-height: 0; list-style: none; background: #fff; }
.tree li { height: 11px; display: flex; align-items: center; line-height: 11px; white-space: nowrap; }
.cat { gap: 2px; color: #aaa797; background: #f6f4ea; font-family: "DejaVu Sans", sans-serif; }
.leaf { gap: 1px; padding-left: 14px; position: relative; }
.leaf::before { content: ""; position: absolute; left: 6px; top: 0; width: 8px; height: 6px; border: 1px dotted #ccc; border-width: 0 0 1px 1px; }
.leaf span { padding: 0 1px; }
.picked { background: #ece9d8; }
.legend { flex: none; height: 104px; padding: 2px 4px 5px; border-spacing: 0; background: #fff; }
.legend th, .legend td { padding: 0; text-align: left; line-height: 9px; white-space: nowrap; }
.legend th { font-weight: bold; color: #000; }
.legend td:first-child { width: 64px; }
.legend b { font-weight: normal; }
.tall { height: 12px; }
sub, sup { font-size: 6px; line-height: 0; }
sub { vertical-align: -1px; }
sup { vertical-align: 3px; }
.c-grey { color: #bbb; }
.c-olive { color: #9a9a20; }
.c-maroon { color: #902030; }
.c-red { color: #cc2030; }
.c-navy { color: #2828a0; }
.c-teal { color: #208888; }
.c-purple { color: #8a2090; }
.c-green { color: #209030; }

.work { flex: 1; min-width: 0; display: flex; flex-direction: column; }
.desk { flex: 1; min-height: 0; position: relative; display: flex; padding-top: 1px; background: #a09e94; }
.win { display: flex; flex-direction: column; border: 4px solid #0a3cc8; border-top: 0; border-radius: 5px 5px 0 0; background: #ece9d8; overflow: hidden; }
.win.idle { flex: 1; border-color: #7880d0; border-right-width: 5px; }
.float { position: absolute; left: 217px; right: 6px; top: 162px; bottom: 1px; }
.wtitle { height: 20px; flex: none; margin: 0 -4px; padding: 2px 5px 0 4px; display: flex; align-items: center; gap: 3px; color: #fff; background: linear-gradient(#0a50d8, #3c90fc 2px, #0456e6 5px, #0560f4 15px, #0848d0 20px); }
.idle .wtitle { margin-right: -5px; color: #d8e4fa; background: linear-gradient(#7898e0, #94b0f0 2px, #7a98e4 6px, #7c9ee8 16px, #7090dc 20px); }
.wbar { height: 21px; flex: none; display: flex; padding: 1px 0 2px; border-bottom: 1px solid #aaa89a; }
.wgroup { flex: 0 1 346px; min-width: 0; display: flex; align-items: center; padding-left: 1px; border-right: 1px solid #c5c2b2; overflow: hidden; }
.w-case { width: 84px; }
.none { color: #aaa; font-style: italic; }
.w-diag { flex: 1; min-width: 0; }
.scene { flex: 1; min-height: 0; width: 100%; display: block; background: #fefffc; }
.val { font: 15px "Liberation Sans", sans-serif; fill: #2020a8; }
.val.red { fill: #d82028; }

.tabs { height: 18px; flex: none; padding-top: 2px; border-bottom: 1px solid #c5c2b2; }
.tab { height: 15px; width: 84px; display: flex; align-items: center; justify-content: space-between; padding: 0 4px 0 3px; border: 1px solid #b5b2a4; border-top-color: #fff; border-left-color: #fff; white-space: nowrap; }
.restore { width: 7px; height: 6px; border: 1px solid #222; border-top-width: 2px; }
.status { height: 15px; flex: none; display: flex; gap: 2px; padding-left: 1px; white-space: nowrap; }
.status span { padding: 2px 1px; border: 1px solid #c5c2b2; border-right-color: #fff; border-bottom-color: #fff; }
.pos { width: 170px; }
.hint { flex: 1; min-width: 0; }
```
